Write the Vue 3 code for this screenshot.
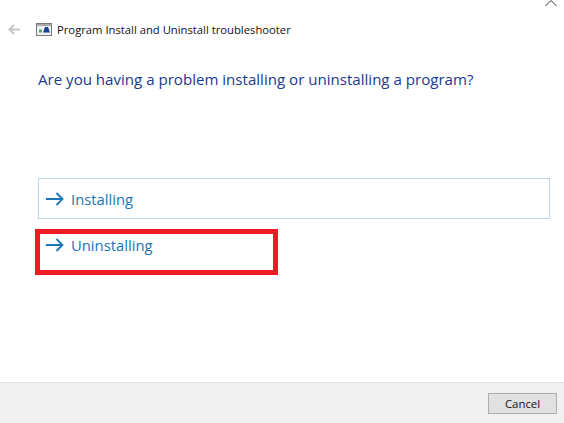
<script setup>
const options = [
  { label: 'Installing', outlined: true },
  { label: 'Uninstalling', outlined: false },
]
</script>

<template>
  <div class="window">
    <svg class="close-tip" width="14" height="6" viewBox="0 0 14 6">
      <path d="M1.5 6 L7 0.5 L12.5 6" fill="none" stroke="#333" stroke-width="1" />
    </svg>

    <header class="title-bar">
      <svg class="back" width="12" height="11" viewBox="0 0 12 11">
        <path d="M12 5.5 H1.5 M6 1 L1.4 5.5 L6 10" fill="none" stroke="#c4c4c4" stroke-width="1.8" />
      </svg>
      <svg class="app-icon" width="16" height="13" viewBox="0 0 16 13">
        <rect x="0.5" y="0.5" width="15" height="12" fill="#f1f1f1" stroke="#77797c" />
        <rect x="1" y="1" width="14" height="2" fill="#a6a9ad" />
        <path d="M7 9.5 L9 4 H12 L14 9.5 Z" fill="#1c3f94" />
        <rect x="3" y="6.5" width="3" height="3" fill="#5f9f72" />
      </svg>
      <span class="title">Program Install and Uninstall troubleshooter</span>
    </header>

    <main class="content">
      <h1 class="question">Are you having a problem installing or uninstalling a program?</h1>
      <div class="options">
        <div
          v-for="option in options"
          :key="option.label"
          class="option"
          :class="{ 'option--outlined': option.outlined }"
        >
          <svg class="arrow" width="18" height="14" viewBox="0 0 18 14">
            <path d="M0 7 H16.5 M10.5 1 L16.5 7 L10.5 13" fill="none" stroke="#1a76b8" stroke-width="1.8" />
          </svg>
          <span>{{ option.label }}</span>
        </div>
        <div class="highlight"></div>
      </div>
    </main>

    <footer class="footer">
      <button class="cancel" type="button">Cancel</button>
    </footer>
  </div>
</template>

<style scoped>
.window {
  position: relative;
  display: flex;
  width: 564px;
  height: 423px;
  flex-direction: column;
  overflow: hidden;
  background: #fff;
  font-family: "Open Sans", "Noto Sans", sans-serif;
}

.close-tip {
  position: absolute;
  top: 0;
  right: 6px;
}

.title-bar {
  display: flex;
  height: 17px;
  align-items: center;
  margin-top: 21px;
  padding-left: 8px;
}

.back {
  margin-right: 16px;
}

.app-icon {
  margin-right: 5px;
}

.title {
  color: #111;
  font-size: 11.25px;
  white-space: nowrap;
}

.content {
  flex: 1;
  padding: 31px 14px 0 38px;
}

.question {
  margin: 0;
  color: #1a3a8f;
  font-size: 15.08px;
  font-weight: 400;
  line-height: 20px;
  white-space: nowrap;
}

.options {
  position: relative;
  display: flex;
  flex-direction: column;
  gap: 5px;
  margin-top: 89px;
}

.option {
  display: flex;
  height: 41px;
  box-sizing: border-box;
  align-items: center;
  gap: 7px;
  padding-left: 7px;
  border: 1px solid transparent;
  color: #1a76b8;
  font-size: 14.8px;
}

.option--outlined {
  border-color: #bcd6e4;
}

.highlight {
  position: absolute;
  top: 51px;
  left: -3px;
  width: 243px;
  height: 46px;
  box-sizing: border-box;
  border: 5px solid #ed1c24;
}

.footer {
  display: flex;
  height: 41px;
  box-sizing: border-box;
  justify-content: flex-end;
  padding: 10px 7px 0 0;
  border-top: 1px solid #dfdfdf;
  background: #f0f0f0;
}

.cancel {
  width: 69px;
  height: 21px;
  padding: 0;
  border: 1px solid #adadad;
  background: #e1e1e1;
  color: #111;
  font-family: inherit;
  font-size: 11.4px;
}
</style>
